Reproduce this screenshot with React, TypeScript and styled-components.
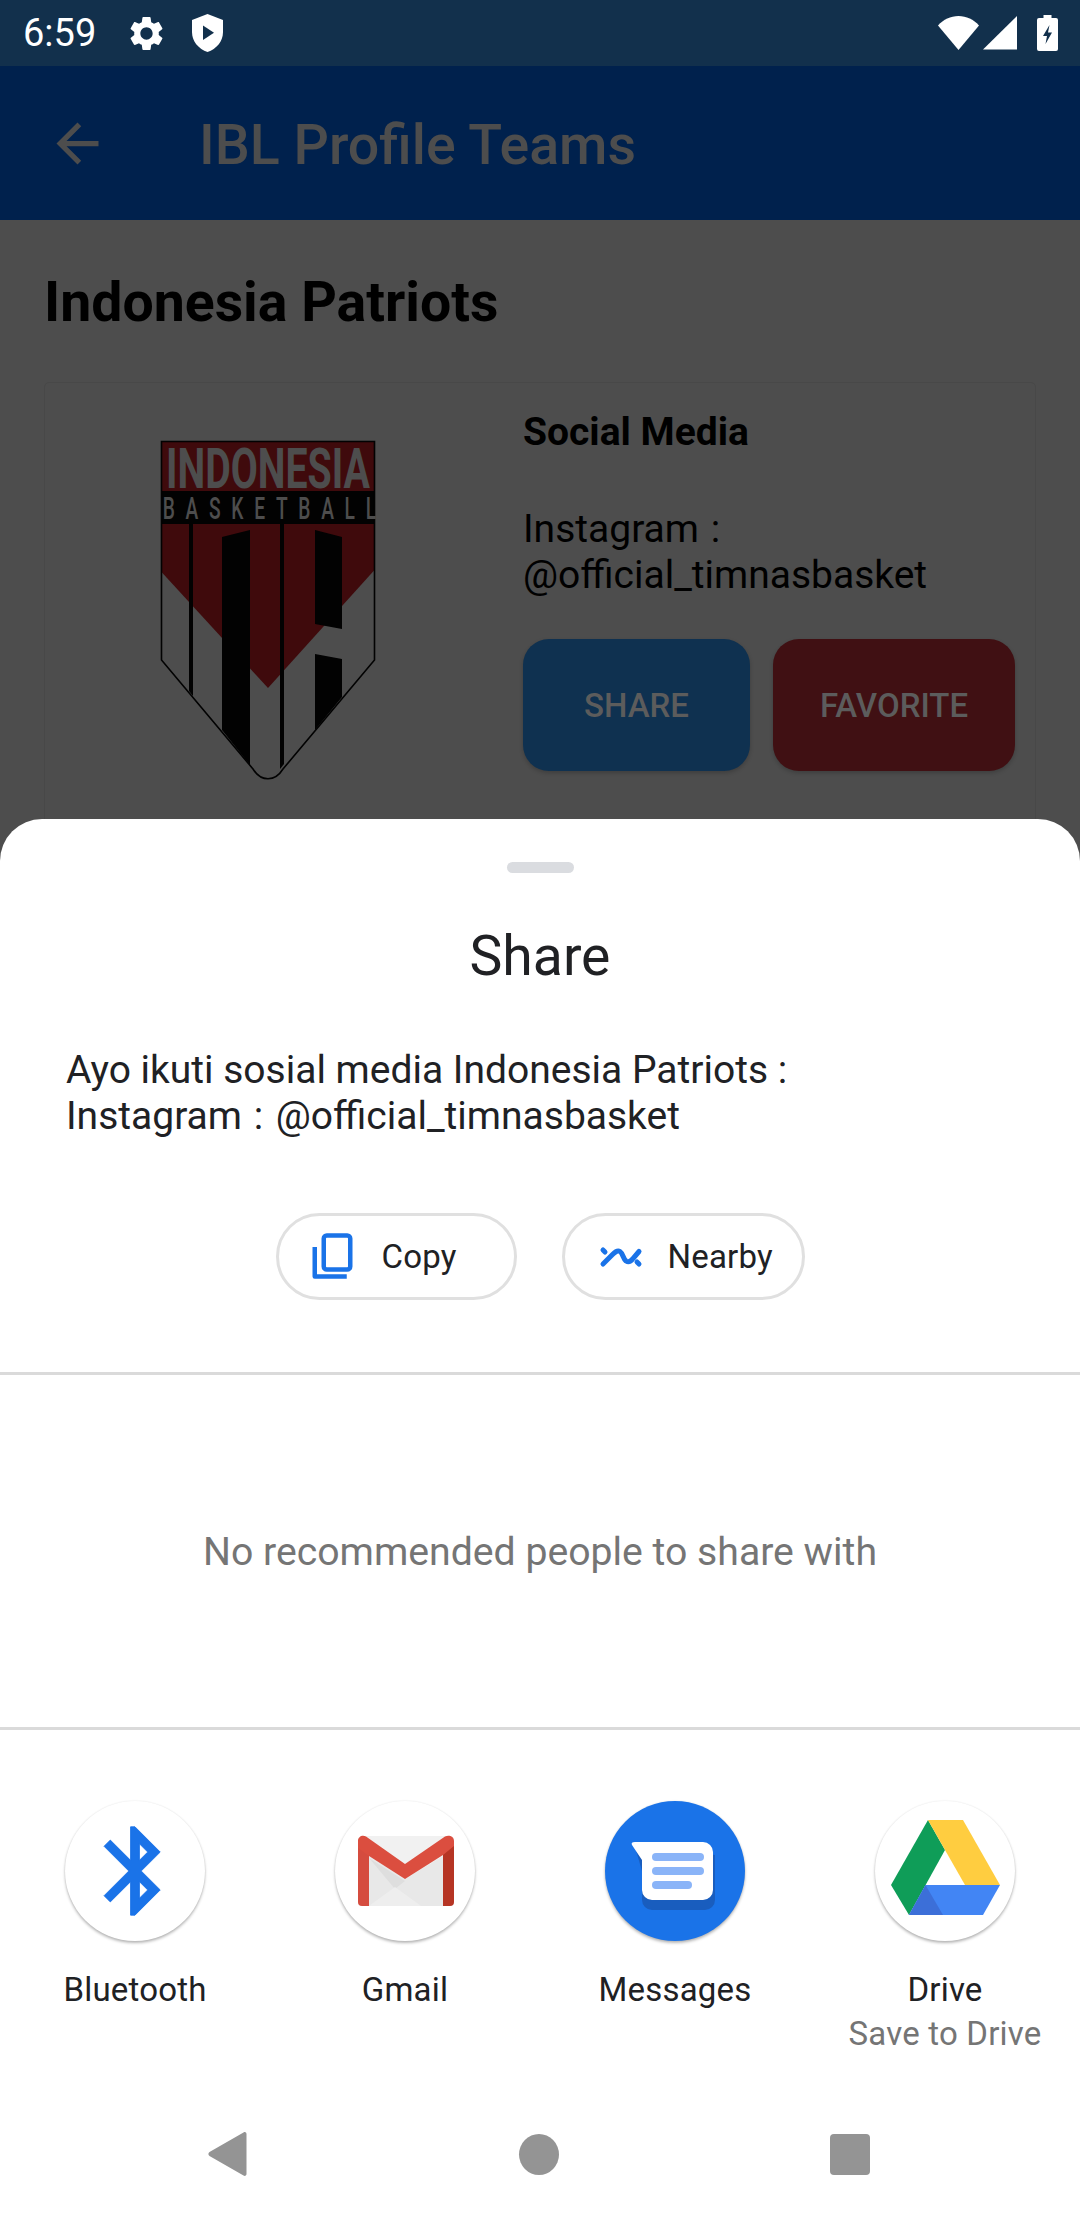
import React from 'react'
import styled, { createGlobalStyle } from 'styled-components'

const GlobalStyle = createGlobalStyle`
  html, body {
    margin: 0;
    padding: 0;
    background: #4d4d4d;
    font-family: Roboto, "Noto Sans", sans-serif;
  }
  * {
    box-sizing: border-box;
  }
`

const Screen = styled.div`
  position: relative;
  width: 1080px;
  height: 2220px;
  overflow: hidden;
  background: #4d4d4d;
`

const StatusBar = styled.div`
  height: 66px;
  background: #12304c;
  display: flex;
  align-items: center;
  justify-content: space-between;
  padding: 0 22px 0 23px;
  color: #fff;
`

const StatusGroup = styled.div<{ gap: number }>`
  display: flex;
  align-items: center;
  gap: ${({ gap }) => gap}px;
`

const Clock = styled.span`
  font-size: 38px;
  line-height: 66px;
  width: 78px;
`

const AppBar = styled.div`
  height: 154px;
  background: #00214d;
  display: flex;
  align-items: center;
  padding-left: 46px;
  color: #4d4d4d;
`

const AppTitle = styled.div`
  margin-left: 90px;
  margin-top: 5px;
  font-size: 55.5px;
  font-weight: 500;
`

const Content = styled.div`
  padding: 0 44px;
`

const PageTitle = styled.h1`
  margin: 0;
  height: 162px;
  padding-top: 50px;
  font-size: 55.4px;
  line-height: 66px;
  font-weight: 700;
  color: #000;
`

const Card = styled.div`
  height: 620px;
  border: 1px solid #484848;
  border-radius: 5px;
  display: flex;
  align-items: flex-start;
`

const LogoBox = styled.div`
  width: 478px;
  padding: 57px 0 0 115px;
`

const Details = styled.div`
  padding-top: 26px;
`

const DetailsTitle = styled.div`
  font-size: 39px;
  line-height: 46px;
  font-weight: 700;
  color: #000;
`

const DetailsText = styled.div`
  margin-top: 51px;
  font-size: 39px;
  line-height: 46px;
  color: #000;
`

const Colon = styled.span`
  margin: 0 3px 0 2px;
`

const ButtonRow = styled.div`
  display: flex;
  gap: 23px;
  margin-top: 41px;
`

const ActionButton = styled.div<{ bg: string; width: number }>`
  width: ${({ width }) => width}px;
  height: 132px;
  border-radius: 26px;
  background: ${({ bg }) => bg};
  color: #5c5c5c;
  font-size: 33px;
  font-weight: 500;
  display: flex;
  align-items: center;
  justify-content: center;
  box-shadow: 0 2px 4px rgba(0, 0, 0, 0.2);
`

const Sheet = styled.div`
  position: absolute;
  left: 0;
  right: 0;
  top: 819px;
  bottom: 0;
  background: #fff;
  border-radius: 42px 42px 0 0;
  display: flex;
  flex-direction: column;
`

const Handle = styled.div`
  width: 67px;
  height: 11px;
  margin: 43px auto 0;
  border-radius: 6px;
  background: #dadce0;
`

const SheetTitle = styled.div`
  margin-top: 54px;
  text-align: center;
  font-size: 55.3px;
  line-height: 60px;
  color: #202124;
`

const Message = styled.div`
  margin-top: 60px;
  padding-left: 66px;
  font-size: 39px;
  line-height: 46px;
  color: #202124;
`

const ChipRow = styled.div`
  display: flex;
  justify-content: center;
  gap: 45px;
  margin-top: 74px;
`

const Chip = styled.div<{ width: number }>`
  width: ${({ width }) => width}px;
  height: 87px;
  border: 3px solid #e0e0e0;
  border-radius: 44px;
  display: flex;
  align-items: center;
  gap: 24px;
  padding-left: 33px;
  font-size: 33px;
  letter-spacing: 0.2px;
  color: #202124;
`

const Divider = styled.div<{ top: number }>`
  height: 3px;
  margin-top: ${({ top }) => top}px;
  background: #dadada;
`

const EmptyNote = styled.div`
  height: 352px;
  padding-top: 2px;
  display: flex;
  align-items: center;
  justify-content: center;
  font-size: 39.2px;
  color: #757575;
`

const AppGrid = styled.div`
  display: grid;
  grid-template-columns: repeat(4, 270px);
  padding-top: 71px;
`

const AppItem = styled.div`
  display: flex;
  flex-direction: column;
  align-items: center;
  text-align: center;
`

const AppCircle = styled.div<{ bg?: string }>`
  width: 140px;
  height: 140px;
  border-radius: 50%;
  background: ${({ bg }) => bg || '#fff'};
  box-shadow: 0 2px 3px rgba(0, 0, 0, 0.28), 0 0 2px rgba(0, 0, 0, 0.08);
  display: flex;
  align-items: center;
  justify-content: center;
  overflow: hidden;
`

const AppLabel = styled.div`
  margin-top: 28px;
  font-size: 33px;
  line-height: 42px;
  letter-spacing: 0.2px;
  color: #202124;
`

const AppSub = styled.div`
  font-size: 33px;
  line-height: 45px;
  letter-spacing: 0.2px;
  color: #757575;
`

const NavBar = styled.div`
  position: absolute;
  left: 0;
  right: 0;
  bottom: 0;
  height: 132px;
  display: flex;
  align-items: center;
  gap: 271px;
  padding-left: 207px;
`

const NavCircle = styled.div`
  width: 40px;
  height: 41px;
  border-radius: 50%;
  background: #949494;
`

const NavSquare = styled.div`
  width: 40px;
  height: 41px;
  border-radius: 4px;
  background: #949494;
`

const BatterySlot = styled.div`
  margin-left: 16px;
  display: flex;
`

const GearIcon = () => (
  <svg width="41" height="41" viewBox="0 0 24 24" fill="#fff">
    <path d="M19.14 12.94c.04-.3.06-.61.06-.94 0-.32-.02-.64-.07-.94l2.03-1.58c.18-.14.23-.41.12-.61l-1.92-3.32c-.12-.22-.37-.29-.59-.22l-2.39.96c-.5-.38-1.03-.7-1.62-.94l-.36-2.54c-.04-.24-.24-.41-.48-.41h-3.84c-.24 0-.43.17-.47.41l-.36 2.54c-.59.24-1.13.57-1.62.94l-2.39-.96c-.22-.08-.47 0-.59.22L2.74 8.87c-.12.21-.08.47.12.61l2.03 1.58c-.05.3-.09.63-.09.94s.02.64.07.94l-2.03 1.58c-.18.14-.23.41-.12.61l1.92 3.32c.12.22.37.29.59.22l2.39-.96c.5.38 1.03.7 1.62.94l.36 2.54c.05.24.24.41.48.41h3.84c.24 0 .44-.17.47-.41l.36-2.54c.59-.24 1.13-.56 1.62-.94l2.39.96c.22.08.47 0 .59-.22l1.92-3.32c.12-.22.07-.47-.12-.61l-2.01-1.58zM12 15.6c-1.98 0-3.6-1.62-3.6-3.6s1.62-3.6 3.6-3.6 3.6 1.62 3.6 3.6-1.62 3.6-3.6 3.6z" />
  </svg>
)

const ShieldIcon = () => (
  <svg width="31" height="38" viewBox="0 0 31 38">
    <path d="M15.5 0L31 6v12c0 9.500-6.600 17-15.500 20C6.600 35 0 27.500 0 18V6z" fill="#fff" />
    <path d="M11 11.500l11 7.200-11 7.200z" fill="#12304c" />
  </svg>
)

const WifiIcon = () => (
  <svg width="41" height="34" viewBox="0 0 41 34">
    <path d="M20.500 34L0 9.500C5.500 3.500 12.500 0 20.500 0s15 3.500 20.500 9.500z" fill="#fff" />
  </svg>
)

const SignalIcon = () => (
  <svg width="34" height="34" viewBox="0 0 34 34">
    <path d="M0 33.500L34 0v33.500z" fill="#fff" />
  </svg>
)

const BatteryIcon = () => (
  <svg width="21" height="36" viewBox="0 0 21 36">
    <path
      d="M6.500 0h8v3H19a2 2 0 0 1 2 2v29a2 2 0 0 1-2 2H2a2 2 0 0 1-2-2V5a2 2 0 0 1 2-2h4.500z"
      fill="#fff"
    />
    <path d="M12.500 10L6 21h4l-1.500 8L15 17.500h-4z" fill="#12304c" />
  </svg>
)

const BackIcon = () => (
  <svg width="63" height="63" viewBox="0 0 24 24" fill="#4d4d4d">
    <path d="M20 11H7.830l5.590-5.590L12 4l-8 8 8 8 1.410-1.410L7.830 13H20v-2z" />
  </svg>
)

// the team crest; coordinates are taken from the 1:1 pixels of the page region
const TeamLogo = () => (
  <svg width="216" height="344" viewBox="40 20 216 344">
    <path d="M41.500 21.500h213V240L163 349c-8 13-22 13-30 0L41.500 240z" fill="#4d4d4d" />
    <rect x="41.500" y="22" width="213" height="50" fill="#3f0a0c" />
    <rect x="41.500" y="71" width="213" height="33" fill="#020202" />
    <path d="M41.500 104h213v46L148 268 41.500 152z" fill="#3f0a0c" />
    <path d="M69 104h4v172l-4-5z" fill="#020202" />
    <path d="M102 117l28-7v235l-28-35z" fill="#020202" />
    <path d="M160 104h4v240l-4 5z" fill="#020202" />
    <path d="M195 110l27 7v92l-27-5zM195 234l27 5v38l-27 33z" fill="#020202" />
    <path
      d="M41.500 21.500h213V240L163 349c-8 13-22 13-30 0L41.500 240z"
      fill="none"
      stroke="#020202"
      strokeWidth="1.600"
    />
    <text
      x="46"
      y="68"
      textLength="204"
      lengthAdjust="spacingAndGlyphs"
      fontFamily="Roboto, sans-serif"
      fontWeight="700"
      fontSize="56"
      fill="#4d4d4d"
    >
      INDONESIA
    </text>
    <g transform="scale(0.62 1)">
      <text
        x="69"
        y="99"
        textLength="344"
        lengthAdjust="spacing"
        fontFamily="Roboto, sans-serif"
        fontWeight="500"
        fontSize="31"
        fill="#4d4d4d"
      >
        BASKETBALL
      </text>
    </g>
  </svg>
)

const CopyIcon = () => (
  <svg width="46" height="47" viewBox="0 0 46 47">
    <rect x="11.750" y="2.500" width="26.500" height="34" rx="3" fill="none" stroke="#1a73e8" strokeWidth="4.500" />
    <path d="M2.750 14v29.500h32" fill="none" stroke="#1a73e8" strokeWidth="4.500" strokeLinejoin="round" />
  </svg>
)

const NearbyIcon = () => (
  <svg width="46" height="24" viewBox="0 0 46 24">
    <path
      d="M5 19l8-8c3-3 6-6.500 9-4.500s3 7 6 9.500c3 2 5.500-.5 7-2.500l6-7M5 5l2 2M39 17l2 2"
      fill="none"
      stroke="#1a73e8"
      strokeWidth="5"
      strokeLinecap="round"
    />
  </svg>
)

const BluetoothIcon = () => (
  <svg width="106" height="106" viewBox="0 0 24 24" fill="#1a73e8" stroke="#1a73e8" strokeWidth="0.2">
    <path d="M17.710 7.710L12 2h-1v7.590L6.410 5 5 6.410 10.590 12 5 17.590 6.410 19 11 14.410V22h1l5.710-5.710-4.300-4.290 4.300-4.290zM13 5.830l1.880 1.880L13 9.590V5.830zm1.880 10.460L13 18.170v-3.760l1.880 1.880z" />
  </svg>
)

const GmailIcon = () => (
  <svg width="140" height="140" viewBox="0 0 140 140">
    <rect x="23" y="35" width="96" height="70" rx="4" fill="#f1f1f1" />
    <path d="M34 55l36 23 38-23v50H34z" fill="#e8e8e8" />
    <path d="M34 57l36 23-10 8z" fill="#dedede" />
    <path d="M34 105l26-19 26 19z" fill="#eeeeee" />
    <path d="M23 42h11v63h-7a4 4 0 0 1-4-4z" fill="#d54c3f" />
    <path d="M108 42h11v59a4 4 0 0 1-4 4h-7z" fill="#b63524" />
    <path d="M23 40c0-4.500 4.500-6.500 8-4.500L70 63l40-27.500c3.500-2 9-.5 9 4.500v5l-11 9-38 24-36-23-11-8z" fill="#db4e3f" />
  </svg>
)

const MessagesIcon = () => (
  <svg width="140" height="140" viewBox="0 0 140 140">
    <path d="M30 46l7 24v29a10 10 0 0 0 10 10h53a10 10 0 0 0 10-10V54z" fill="#1a56b0" opacity="0.75" />
    <path
      d="M30 41h68a10 10 0 0 1 10 10v38a10 10 0 0 1-10 10H47a10 10 0 0 1-10-10V59L27 44c-1-2 0-3 3-3z"
      fill="#fff"
    />
    <rect x="47" y="52" width="52" height="8" rx="4" fill="#8ab4f8" />
    <rect x="47" y="66" width="52" height="8" rx="4" fill="#8ab4f8" />
    <rect x="47" y="80" width="40" height="8" rx="4" fill="#8ab4f8" />
  </svg>
)

const DriveIcon = () => (
  <svg width="140" height="140" viewBox="0 0 140 140">
    <path d="M53 19l17 30-36 65-18-30z" fill="#0f9d58" />
    <path d="M53 19h35l37 65H90L70 49z" fill="#ffcd40" />
    <path d="M50.500 84H125l-17 30H34z" fill="#4285f4" />
    <path d="M50.500 84L68 114H34z" fill="#3c6fd8" />
  </svg>
)

const NavBackIcon = () => (
  <svg width="41" height="46" viewBox="0 0 40 46">
    <path d="M36 1.500c1.500-1 3 0 3 1.500v40c0 1.500-1.500 2.500-3 1.500L2 25c-1.500-1-1.500-3 0-4z" fill="#949494" />
  </svg>
)

const App: React.FC = () => (
  <Screen>
    <GlobalStyle />
    <StatusBar>
      <StatusGroup gap={25}>
        <Clock>6:59</Clock>
        <GearIcon />
        <ShieldIcon />
      </StatusGroup>
      <StatusGroup gap={4}>
        <WifiIcon />
        <SignalIcon />
        <BatterySlot>
          <BatteryIcon />
        </BatterySlot>
      </StatusGroup>
    </StatusBar>
    <AppBar>
      <BackIcon />
      <AppTitle>IBL Profile Teams</AppTitle>
    </AppBar>
    <Content>
      <PageTitle>Indonesia Patriots</PageTitle>
      <Card>
        <LogoBox>
          <TeamLogo />
        </LogoBox>
        <Details>
          <DetailsTitle>Social Media</DetailsTitle>
          <DetailsText>
            Instagram<Colon> :</Colon>
            <br />
            @official_timnasbasket
          </DetailsText>
          <ButtonRow>
            <ActionButton bg="#0f3150" width={227}>
              SHARE
            </ActionButton>
            <ActionButton bg="#401013" width={242}>
              FAVORITE
            </ActionButton>
          </ButtonRow>
        </Details>
      </Card>
    </Content>
    <Sheet>
      <Handle />
      <SheetTitle>Share</SheetTitle>
      <Message>
        Ayo ikuti sosial media Indonesia Patriots :
        <br />
        Instagram<Colon> : </Colon>@official_timnasbasket
      </Message>
      <ChipRow>
        <Chip width={241}>
          <CopyIcon />
          Copy
        </Chip>
        <Chip width={243}>
          <NearbyIcon />
          Nearby
        </Chip>
      </ChipRow>
      <Divider top={72} />
      <EmptyNote>No recommended people to share with</EmptyNote>
      <Divider top={0} />
      <AppGrid>
        <AppItem>
          <AppCircle>
            <BluetoothIcon />
          </AppCircle>
          <AppLabel>Bluetooth</AppLabel>
        </AppItem>
        <AppItem>
          <AppCircle>
            <GmailIcon />
          </AppCircle>
          <AppLabel>Gmail</AppLabel>
        </AppItem>
        <AppItem>
          <AppCircle bg="#1a73e8">
            <MessagesIcon />
          </AppCircle>
          <AppLabel>Messages</AppLabel>
        </AppItem>
        <AppItem>
          <AppCircle>
            <DriveIcon />
          </AppCircle>
          <AppLabel>Drive</AppLabel>
          <AppSub>Save to Drive</AppSub>
        </AppItem>
      </AppGrid>
      <NavBar>
        <NavBackIcon />
        <NavCircle />
        <NavSquare />
      </NavBar>
    </Sheet>
  </Screen>
)

export default App
